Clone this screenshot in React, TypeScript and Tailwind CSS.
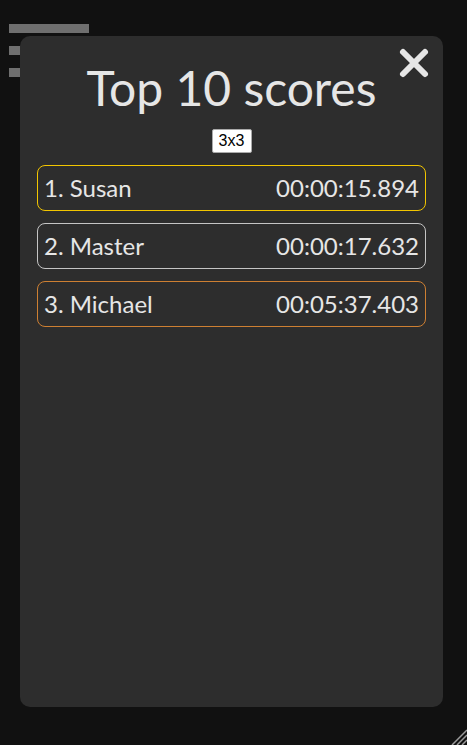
const scores = [
  { name: "Susan", time: "00:00:15.894", border: "border-[#f2c500]" },
  { name: "Master", time: "00:00:17.632", border: "border-[#c4c4c4]" },
  { name: "Michael", time: "00:05:37.403", border: "border-[#cd7f32]" },
];

const App = () => {
  return (
    <div className="relative w-[467px] h-[745px] bg-[#111111] overflow-hidden font-['Lato',sans-serif]">
      {/* menu behind the modal */}
      <div className="absolute left-[9px] top-[24px] flex flex-col gap-[13px]">
        <div className="w-[80px] h-[9px] bg-[#6f6f6f]" />
        <div className="w-[80px] h-[9px] bg-[#6f6f6f]" />
        <div className="w-[80px] h-[9px] bg-[#6f6f6f]" />
      </div>

      <div className="absolute left-[20px] top-[36px] w-[423px] h-[671px] rounded-[10px] bg-[#2d2d2d] px-[17px] pt-[22px]">
        <button className="absolute right-[13px] top-[11px] w-[32px] h-[32px] flex items-center justify-center">
          <svg width="32" height="32" viewBox="0 0 32 32">
            <path d="M5 5 L27 27 M27 5 L5 27" stroke="#e6e6e6" strokeWidth="6" strokeLinecap="round" />
          </svg>
        </button>

        <h1 className="text-center text-[48px] leading-[60px] text-[#e6e6e6] font-normal">Top 10 scores</h1>

        <div className="flex justify-center mt-[11px]">
          <div className="bg-white text-black border border-[#aaa] rounded-[2px] h-[24px] w-[40px] flex items-center justify-center text-[16px] leading-none font-['Liberation_Sans',sans-serif]">
            3x3
          </div>
        </div>

        <div className="mt-[12px] flex flex-col gap-[12px]">
          {scores.map((s, i) => (
            <div
              key={s.name}
              className={`flex items-center justify-between h-[46px] border ${s.border} rounded-[8px] px-[6px] text-[24px] text-[#e6e6e6]`}
            >
              <span>{i + 1}. {s.name}</span>
              <span>{s.time}</span>
            </div>
          ))}
        </div>
      </div>

      <svg className="absolute right-0 bottom-0" width="17" height="17" viewBox="0 0 17 17">
        <path d="M17 2 L2 17 M17 7 L7 17 M17 12 L12 17" stroke="#9a9a9a" strokeWidth="1.5" />
      </svg>
    </div>
  );
};

export default App;
